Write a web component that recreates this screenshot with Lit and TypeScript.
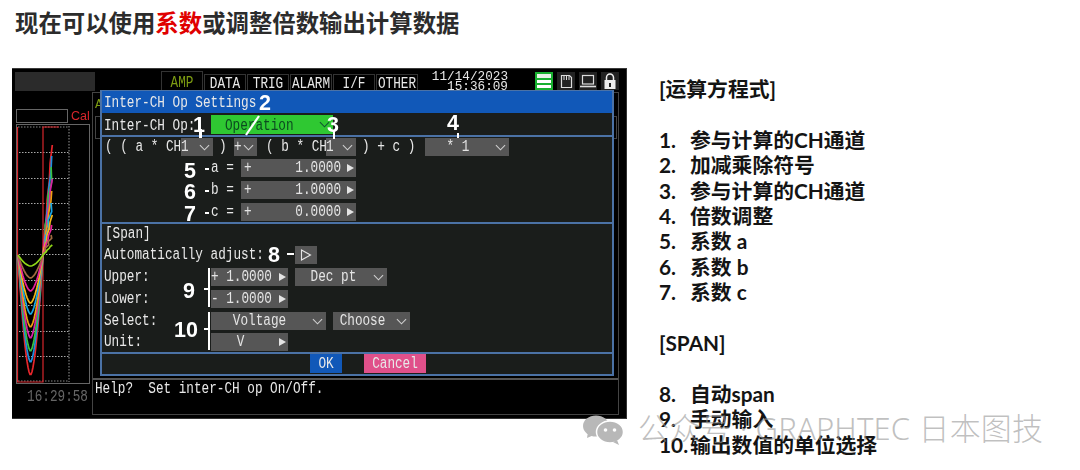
import { LitElement, html, css, svg } from "lit";
import { customElement } from "lit/decorators.js";

const chev = html`<svg class="chev" viewBox="0 0 12 7"><path d="M1 1l5 5 5-5" fill="none" stroke="currentColor" stroke-width="1.2"/></svg>`;
const arrow = html`<svg class="arr" viewBox="0 0 7 8"><path d="M0 0l7 4-7 4z" fill="#e4e4e4"/></svg>`;
const t = (s: string) => html`<span class="t">${s}</span>`;

const callouts = [
  { n: "1", x: 181, y: 46 }, { n: "2", x: 247, y: 24 }, { n: "3", x: 315, y: 46 }, { n: "4", x: 435, y: 44 },
  { n: "5", x: 172, y: 92 }, { n: "6", x: 172, y: 113 }, { n: "7", x: 172, y: 135 }, { n: "8", x: 256, y: 176 },
  { n: "9", x: 171, y: 212 }, { n: "10", x: 162, y: 251 },
];
const ticks = [
  { x: 193, y: 99, w: 4, h: 2 }, { x: 193, y: 121, w: 4, h: 2 }, { x: 193, y: 143, w: 4, h: 2 },
  { x: 275, y: 184, w: 7, h: 2 }, { x: 196, y: 199, w: 2, h: 39 }, { x: 192, y: 219, w: 4, h: 2 },
  { x: 196, y: 243, w: 2, h: 38 }, { x: 192, y: 259, w: 4, h: 2 }, { x: 321, y: 62, w: 2, h: 8 },
  { x: 445, y: 64, w: 2, h: 5 }, { x: 187, y: 60, w: 3, h: 9 },
];
const curves = [
  { c: "#e8262c", b: 375, top: 145 }, { c: "#1c8fe0", b: 362, top: 156 }, { c: "#38c040", b: 351, top: 167 },
  { c: "#d820a8", b: 338, top: 179 }, { c: "#f0a010", b: 327, top: 191 }, { c: "#18a8e8", b: 314, top: 203 },
  { c: "#f4b818", b: 303, top: 215 }, { c: "#e8209c", b: 291, top: 225 }, { c: "#a06a40", b: 278, top: 235 },
  { c: "#90d818", b: 266, top: 245 },
];
function curvePts(b: number, top: number, idx: number) {
  const pts: string[] = [];
  for (let x = 18; x <= 43; x += 1) {
    const d = Math.abs(x - 30.5) / 12.5;
    pts.push(`${x - 16},${(b + (255 - b) * Math.pow(d, 1.7) - 124).toFixed(1)}`);
  }
  for (let i = 1; i <= 6; i++) {
    const x = 43 + i * 1.5 + (i % 2 ? 0.8 : -0.6) * ((idx % 3) - 0.5);
    pts.push(`${x - 16},${(255 + (top - 255) * (i / 6) - 124).toFixed(1)}`);
  }
  return pts.join(" ");
}
const gridYs = [152, 178, 203, 229, 254, 280, 305, 331, 356];
const notesA = ["参与计算的CH通道", "加减乘除符号", "参与计算的CH通道", "倍数调整", "系数 a", "系数 b", "系数 c"];
const notesB = ["自动span", "手动输入", "输出数值的单位选择"];

@customElement("app-root")
export class AppRoot extends LitElement {
  static styles = css`
    :host { display: block; width: 1080px; height: 470px; overflow: hidden; background: #fff; position: relative;
      font-family: "Lato", "Noto Sans CJK SC", sans-serif; }
    .title { height: 68px; padding: 0 0 0 15px; box-sizing: border-box; font: 700 23.4px/45px "Noto Sans CJK SC", sans-serif; color: #2c2c2c; }
    .title b { color: #e00000; font-weight: 700; }
    .main { display: flex; padding-left: 12px; align-items: flex-start; }
    .screen { width: 615px; height: 351px; background: #000; position: relative; flex: none; box-sizing: border-box;
      border-top: 1px solid #3a3a3a; border-right: 1px solid #333; border-bottom: 1px solid #333;
      font: 12.7px/1 "Liberation Mono", monospace; color: #e8e8e8; filter: blur(0.45px); }
    .t { display: inline-block; transform: scaleY(1.25); white-space: pre; }
    .top { height: 23px; display: flex; padding: 2px 0 0 3px; box-sizing: border-box; }
    .darkbox { width: 80px; height: 19px; margin: 1px 66px 0 0; background: #2b2b2b; }
    .tab { height: 21px; width: 42px; box-sizing: border-box; border: 1px solid #333; border-bottom: 0; margin-right: 1px; margin-top: 3px;
      display: flex; justify-content: center; padding-top: 4px; }
    .tab.on { color: #7d9c12; height: 24px; margin-top: 0; padding-top: 6px; }
    .date { width: 88px; margin-left: 1px; text-align: right; line-height: 10px; font-size: 12.7px; height: 21px; overflow: hidden; padding-top: 1px; box-sizing: border-box; }
    .date .t { transform: scaleY(1.05); }
    .icons { display: flex; gap: 4px; margin-left: 27px; margin-top: 1px; }
    .ic { width: 18px; height: 18px; background: #222; display: block; }
    .body { display: flex; height: 327px; padding-left: 3px; }
    .left { width: 77px; flex: none; padding-top: 16px; box-sizing: border-box; }
    .calrow { display: flex; align-items: center; gap: 3px; height: 16px; margin-left: 1px; }
    .calbox { width: 52px; height: 14px; border: 1px solid #666; box-sizing: border-box; }
    .cal { color: #d8262c; font: 12.5px "Liberation Sans", sans-serif; }
    .chart { display: block; width: 74px; height: 260px; margin-left: 1px; }
    .time { color: #666; text-align: right; padding: 7px 4px 0 0; letter-spacing: 0; }
    .frame { width: 527px; height: 323px; box-sizing: border-box; border: 1px solid #444; flex: none; display: flex; flex-direction: column; }
    .under { height: 287px; box-sizing: border-box; border-bottom: 2px solid #555; padding: 6px 1px 0 2px; }
    .under .a { color: #7d9c12; display: block; height: 17px; }
    .under .bx { display: flex; justify-content: space-between; }
    .under .bx i { display: block; width: 7px; height: 21px; border: 1px solid #444; }
    .help { padding: 3px 0 0 2px; }
    .dialog { position: absolute; left: 88px; top: 21px; width: 514px; height: 286px; box-sizing: border-box; background: #1a1d1b;
      border: 2px solid #4b72a6; border-top-width: 1px; display: flex; flex-direction: column; }
    .dtitle { height: 22px; background: #1158b8; padding: 6px 0 0 2px; box-sizing: border-box; flex: none; }
    .r1 { height: 24px; flex: none; box-sizing: border-box; border-bottom: 2px solid #4b72a6; display: flex; padding: 2px 0 0 2px; }
    .r1 .lab { width: 107px; padding-top: 5px; }
    .sel { height: 18px; background: #565656; display: flex; align-items: center; position: relative; box-sizing: border-box; flex: none; color: #e4e4e4; }
    .sel.green { background: #2fc832; color: #0c4a20; height: 19px; width: 122px; padding: 3px 0 0 14px; }
    .chev { position: absolute; right: 3px; top: 6px; width: 11px; height: 7px; color: #cfcfcf; }
    .green .chev { color: #153; }
    .arr { position: absolute; right: 2px; top: 5px; width: 7px; height: 8px; }
    .sec2 { height: 87px; flex: none; box-sizing: border-box; border-bottom: 2px solid #4b72a6; padding: 1px 0 0 3px; display: flex; flex-direction: column; gap: 3px; }
    .eq { display: flex; align-items: center; height: 18px; }
    .eq .e1 { width: 76px; }
    .eq .e2 { width: 21px; padding-left: 6px; box-sizing: border-box; }
    .eq .e3 { width: 69px; padding-left: 9px; box-sizing: border-box; }
    .eq .e4 { width: 69px; padding-left: 6px; box-sizing: border-box; }
    .coef { display: flex; flex-direction: column; gap: 4px; }
    .cf { display: flex; height: 18px; align-items: center; padding-left: 106px; }
    .cf .l { width: 30px; }
    .sec3 { height: 130px; flex: none; box-sizing: border-box; border-bottom: 2px solid #4b72a6; }
    .span { height: 22px; padding: 4px 0 0 3px; box-sizing: border-box; }
    .grid { display: flex; flex-direction: column; gap: 4px; }
    .g { display: flex; height: 18px; align-items: center; }
    .g.up { margin-top: -1px; }
    .g .l { width: 109px; flex: none; padding-left: 2px; box-sizing: border-box; }
    .g .la { width: 193px; flex: none; padding-left: 2px; box-sizing: border-box; }
    .w32 { width: 32px; } .w23 { width: 23px; } .w30 { width: 30px; } .w84 { width: 84px; } .w115 { width: 115px; } .w77 { width: 77px; } .w92 { width: 92px; }
    .ml7 { margin-left: 7px; }
    .c { justify-content: center; padding-right: 18px; box-sizing: border-box; }
    .pl { padding-left: 3px; }
    .pl2 { padding-left: 8px; }
    .val { flex: 1; text-align: right; padding-right: 15px; }
    .play { width: 22px; height: 18px; background: #565656; display: flex; align-items: center; justify-content: center; }
    .play svg { width: 12px; height: 12px; }
    .foot { flex: 1; display: flex; padding-left: 208px; align-items: flex-start; }
    .btn { height: 19px; display: flex; align-items: center; justify-content: center; padding-top: 2px; box-sizing: border-box; }
    .ok { width: 32px; background: #1158b8; margin-right: 22px; }
    .cancel { width: 62px; background: #e0508a; }
    .co { position: absolute; color: #fff; font: 700 21.5px/1 "Liberation Sans", sans-serif; }
    .tk { position: absolute; background: #fff; }
    .slash { position: absolute; left: 229px; top: 46px; width: 22px; height: 22px; }
    .notes { margin: 8px 0 0 32px; color: #141414; font-weight: 700; font-size: 20.8px; line-height: 25.4px; }
    .notes .blank { height: 25.4px; }
    .li { display: flex; height: 25.4px; }
    .li span:first-child { width: 31px; flex: none; }
    .wm { position: absolute; left: 583px; top: 410px; display: flex; align-items: center; gap: 14px; pointer-events: none; color: rgba(150,150,150,.6);
      font: 300 31px/30px "Noto Sans", "Noto Sans CJK SC", sans-serif; white-space: pre; letter-spacing: 0.15px; }
    .wm svg { width: 41px; height: 31px; margin-top: 4px; }
  `;

  chart() {
    return svg`
      <rect x="0.5" y="0.5" width="73" height="259" fill="none" stroke="#666"/>
      <line x1="53" y1="2" x2="53" y2="258" stroke="#999" stroke-dasharray="1.5 1.5"/>
      <line x1="2" y1="3" x2="53" y2="3" stroke="#888" stroke-dasharray="1.5 1.5"/>
      <line x1="2" y1="257" x2="53" y2="257" stroke="#888" stroke-dasharray="1.5 1.5"/>
      ${gridYs.map((y) => svg`<line x1="3" y1=${y - 124 + 0.5} x2="53" y2=${y - 124 + 0.5} stroke="#aaa" stroke-dasharray="1.5 1.5"/>`)}
      <path d="M1.5 3V258H27V3H43" fill="none" stroke="#d8262c" stroke-width="1.2"/>
      ${curves.map((c, i) => svg`<polyline points=${curvePts(c.b, c.top, i)} fill="none" stroke=${c.c} stroke-width="1.7"/>`)}
    `;
  }

  render() {
    return html`
      <div class="title">现在可以使用<b>系数</b>或调整倍数输出计算数据</div>
      <div class="main">
        <div class="screen">
          <div class="top">
            <div class="darkbox"></div>
            <div class="tab on">${t("AMP")}</div>
            <div class="tab">${t("DATA")}</div>
            <div class="tab">${t("TRIG")}</div>
            <div class="tab">${t("ALARM")}</div>
            <div class="tab">${t("I/F")}</div>
            <div class="tab">${t("OTHER")}</div>
            <div class="date">${t("11/14/2023")}<br />${t("15:36:09")}</div>
            <div class="icons">
              <svg class="ic" viewBox="0 0 18 18"><rect width="18" height="18" fill="#18b030"/><rect x="2" y="2" width="14" height="4" fill="#e8f4e8"/><rect x="2" y="8" width="14" height="3" fill="#fff"/><rect x="2" y="13" width="14" height="3" fill="#fff"/></svg>
              <svg class="ic" viewBox="0 0 18 18"><path d="M4.5 3.5h8l2 2v10h-10z" fill="none" stroke="#ddd" stroke-width="1.2"/><path d="M7 4v4M9.5 4v4M12 4v4" stroke="#ddd"/></svg>
              <svg class="ic" viewBox="0 0 18 18"><rect x="3.5" y="3.5" width="11" height="8.5" fill="none" stroke="#ddd" stroke-width="1.2"/><path d="M1 14.5h16" stroke="#ddd" stroke-width="1.6"/></svg>
              <svg class="ic" viewBox="0 0 18 18"><path d="M5.5 8V5.5a3.5 3.5 0 0 1 7 0V8" fill="none" stroke="#eee" stroke-width="1.5"/><rect x="3.5" y="8" width="11" height="9" fill="#eee"/><rect x="8" y="11" width="2" height="4" fill="#222"/></svg>
            </div>
          </div>
          <div class="body">
            <div class="left">
              <div class="calrow"><div class="calbox"></div><span class="cal">Cal</span></div>
              <svg class="chart" viewBox="0 0 74 260">${this.chart()}</svg>
              <div class="time">${t("16:29:58")}</div>
            </div>
            <div class="frame">
              <div class="under"><span class="a">A</span><div class="bx"><i></i><i></i></div></div>
              <div class="help">${t("Help?  Set inter-CH op On/Off.")}</div>
            </div>
          </div>
          <div class="dialog">
            <div class="dtitle">${t("Inter-CH Op Settings")}</div>
            <div class="r1">
              <div class="lab">${t("Inter-CH Op:")}</div>
              <div class="sel green">${t("Operation")}${chev}</div>
            </div>
            <div class="sec2">
              <div class="eq">
                <span class="e1">${t("( ( a * CH")}</span>
                <div class="sel w32">${t("1")}${chev}</div>
                <span class="e2">${t(")")}</span>
                <div class="sel w23">${t("+")}${chev}</div>
                <span class="e3">${t("( b * CH")}</span>
                <div class="sel w30">${t("1")}${chev}</div>
                <span class="e4">${t(") + c )")}</span>
                <div class="sel w84 c">${t("* 1")}${chev}</div>
              </div>
              <div class="coef">
                ${[["a", "1.0000"], ["b", "1.0000"], ["c", "0.0000"]].map(([k, v]) => html`
                  <div class="cf"><span class="l">${t(`${k} =`)}</span>
                    <div class="sel w115 pl">${t("+")}<span class="val">${t(v)}</span>${arrow}</div></div>`)}
              </div>
            </div>
            <div class="sec3">
              <div class="span">${t("[Span]")}</div>
              <div class="grid">
                <div class="g"><span class="la">${t("Automatically adjust:")}</span>
                  <div class="play"><svg viewBox="0 0 12 12"><path d="M1.5 1l9 5-9 5z" fill="none" stroke="#e4e4e4" stroke-width="1.1"/></svg></div></div>
                <div class="g"><span class="l">${t("Upper:")}</span>
                  <div class="sel w77">${t("+ 1.0000")}${arrow}</div>
                  <div class="sel w92 ml7 pl2">${t(" Dec pt")}${chev}</div></div>
                <div class="g"><span class="l">${t("Lower:")}</span>
                  <div class="sel w77">${t("- 1.0000")}${arrow}</div></div>
                <div class="g"><span class="l">${t("Select:")}</span>
                  <div class="sel w115 c">${t("Voltage")}${chev}</div>
                  <div class="sel w77 ml7 c">${t("Choose")}${chev}</div></div>
                <div class="g up"><span class="l">${t("Unit:")}</span>
                  <div class="sel w77 c">${t("V")}${arrow}</div></div>
              </div>
            </div>
            <div class="foot">
              <div class="btn ok">${t("OK")}</div>
              <div class="btn cancel">${t("Cancel")}</div>
            </div>
          </div>
          ${ticks.map((k) => html`<div class="tk" style="left:${k.x}px;top:${k.y}px;width:${k.w}px;height:${k.h}px"></div>`)}
          <svg class="slash" viewBox="0 0 22 22"><path d="M18 1L5 20" stroke="#fff" stroke-width="2.2"/></svg>
          ${callouts.map((c) => html`<div class="co" style="left:${c.x}px;top:${c.y}px">${c.n}</div>`)}
        </div>
        <div class="notes">
          <div>[运算方程式]</div>
          <div class="blank"></div>
          ${notesA.map((s, i) => html`<div class="li"><span>${i + 1}.</span><span>${s}</span></div>`)}
          <div class="blank"></div>
          <div>[SPAN]</div>
          <div class="blank"></div>
          ${notesB.map((s, i) => html`<div class="li"><span>${i + 8}.</span><span>${s}</span></div>`)}
        </div>
      </div>
      <div class="wm">
        <svg viewBox="0 0 41 31"><ellipse cx="13" cy="12" rx="13" ry="10.5" fill="#b8b8b8"/><path d="M5 18l-1 6 7-3z" fill="#b8b8b8"/><ellipse cx="27" cy="18" rx="13.5" ry="11" fill="#b8b8b8" stroke="#fff" stroke-width="1.5"/><path d="M34 26l2 5-6-3z" fill="#b8b8b8"/><circle cx="22.5" cy="16" r="1.8" fill="#fff"/><circle cx="31.5" cy="16" r="1.8" fill="#fff"/></svg>
        <span>公众号 · GRAPHTEC 日本图技</span>
      </div>
    `;
  }
}
